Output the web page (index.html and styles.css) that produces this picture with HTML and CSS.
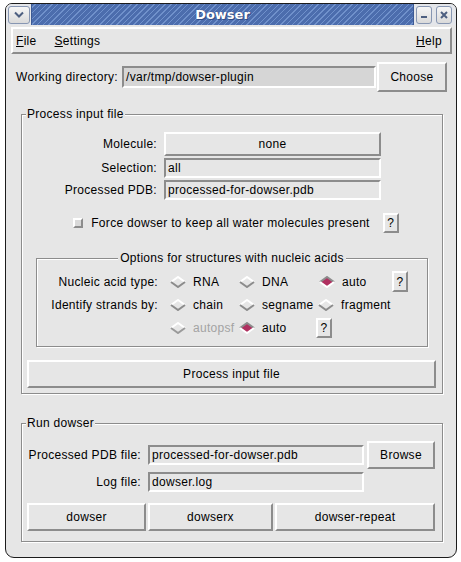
FILE: index.html
```html
<!DOCTYPE html>
<html>
<head>
<meta charset="utf-8">
<title>Dowser</title>
<link rel="stylesheet" href="styles.css">
</head>
<body>
<div class="window">
  <div class="titlebar">
    <div class="tb-btn tb-menu">
      <svg width="10" height="7" viewBox="0 0 10 7"><path d="M1 1.5 L5 5.5 L9 1.5" fill="none" stroke="#4d5f80" stroke-width="2"/></svg>
    </div>
    <div class="tb-title">Dowser</div>
    <div class="tb-btn tb-min">
      <svg width="8" height="8" viewBox="0 0 8 8"><rect x="1" y="5" width="6" height="2" fill="#4d5f80"/></svg>
    </div>
    <div class="tb-btn tb-close">
      <svg width="8" height="8" viewBox="0 0 8 8"><path d="M1 1 L7 7 M7 1 L1 7" stroke="#4d5f80" stroke-width="2"/></svg>
    </div>
  </div>

  <div class="menubar">
    <span class="menu"><u>F</u>ile</span>
    <span class="menu"><u>S</u>ettings</span>
    <span class="spacer"></span>
    <span class="menu"><u>H</u>elp</span>
  </div>

  <div class="workrow">
    <span class="worklabel">Working directory:</span>
    <span class="entry entry-ro workentry">/var/tmp/dowser-plugin</span>
    <span class="button choose">Choose</span>
  </div>

  <fieldset class="group process">
    <legend>Process input file</legend>
    <div class="form">
      <span class="flabel">Molecule:</span><span class="button molecule">none</span>
      <span class="flabel">Selection:</span><span class="entry">all</span>
      <span class="flabel">Processed PDB:</span><span class="entry">processed-for-dowser.pdb</span>
    </div>
    <div class="checkrow">
      <span class="checkbox"></span>
      <span>Force dowser to keep all water molecules present</span>
      <span class="qbtn qcheck">?</span>
    </div>

    <fieldset class="group options">
      <legend class="center">Options for structures with nucleic acids</legend>
      <div class="optgrid">
        <span class="olabel">Nucleic acid type:</span>
        <span class="radio"><svg class="dia" width="16" height="12" viewBox="0 0 16 12"><path d="M1 6 L8 1 L15 6" fill="none" stroke="#fff" stroke-width="2"/><path d="M1 6 L8 11 L15 6" fill="none" stroke="#8c8c8c" stroke-width="2"/></svg>RNA</span>
        <span class="radio"><svg class="dia" width="16" height="12" viewBox="0 0 16 12"><path d="M1 6 L8 1 L15 6" fill="none" stroke="#fff" stroke-width="2"/><path d="M1 6 L8 11 L15 6" fill="none" stroke="#8c8c8c" stroke-width="2"/></svg>DNA</span>
        <span class="radio"><svg class="dia" width="16" height="12" viewBox="0 0 16 12"><path d="M8 1 L15 6 L8 11 L1 6 Z" fill="#b03060"/><path d="M1 6 L8 1 L15 6" fill="none" stroke="#8c8c8c" stroke-width="2"/><path d="M1 6 L8 11 L15 6" fill="none" stroke="#fff" stroke-width="2"/></svg>auto</span>
        <span class="qcell"><span class="qbtn q1">?</span></span>

        <span class="olabel">Identify strands by:</span>
        <span class="radio"><svg class="dia" width="16" height="12" viewBox="0 0 16 12"><path d="M1 6 L8 1 L15 6" fill="none" stroke="#fff" stroke-width="2"/><path d="M1 6 L8 11 L15 6" fill="none" stroke="#8c8c8c" stroke-width="2"/></svg>chain</span>
        <span class="radio"><svg class="dia" width="16" height="12" viewBox="0 0 16 12"><path d="M1 6 L8 1 L15 6" fill="none" stroke="#fff" stroke-width="2"/><path d="M1 6 L8 11 L15 6" fill="none" stroke="#8c8c8c" stroke-width="2"/></svg>segname</span>
        <span class="radio r3"><svg class="dia" width="16" height="12" viewBox="0 0 16 12"><path d="M1 6 L8 1 L15 6" fill="none" stroke="#fff" stroke-width="2"/><path d="M1 6 L8 11 L15 6" fill="none" stroke="#8c8c8c" stroke-width="2"/></svg>fragment</span>
        <span></span>

        <span></span>
        <span class="radio disabled"><svg class="dia" width="16" height="12" viewBox="0 0 16 12"><path d="M1 6 L8 1 L15 6" fill="none" stroke="#fff" stroke-width="2"/><path d="M1 6 L8 11 L15 6" fill="none" stroke="#9a9a9a" stroke-width="2"/></svg>autopsf</span>
        <span class="radio"><svg class="dia" width="16" height="12" viewBox="0 0 16 12"><path d="M8 1 L15 6 L8 11 L1 6 Z" fill="#b03060"/><path d="M1 6 L8 1 L15 6" fill="none" stroke="#8c8c8c" stroke-width="2"/><path d="M1 6 L8 11 L15 6" fill="none" stroke="#fff" stroke-width="2"/></svg>auto</span>
        <span class="qcell"><span class="qbtn q3">?</span></span>
        <span></span>
      </div>
    </fieldset>

    <div class="button bigbtn">Process input file</div>
  </fieldset>

  <fieldset class="group run">
    <legend>Run dowser</legend>
    <div class="runrow">
      <span class="rlabel">Processed PDB file:</span>
      <span class="entry rentry">processed-for-dowser.pdb</span>
      <span class="button browse">Browse</span>
    </div>
    <div class="runrow logrow">
      <span class="rlabel">Log file:</span>
      <span class="entry rentry">dowser.log</span>
    </div>
    <div class="btnrow">
      <span class="button b1">dowser</span>
      <span class="button b2">dowserx</span>
      <span class="button b3">dowser-repeat</span>
    </div>
  </fieldset>
</div>
</body>
</html>
```

FILE: styles.css
```css
* { box-sizing: border-box; }

body {
  margin: 0;
  background: #ffffff;
  font-family: "Liberation Sans", Arial, sans-serif;
  font-size: 12px;
  letter-spacing: 0.3px;
  color: #000;
}

.window {
  margin: 3px 0 0 5px;
  width: 452px;
  height: 555px;
  border: 1px solid #1c1c1c;
  border-radius: 7px 7px 9px 9px;
  background: #e6e6e6;
  overflow: hidden;
}

/* ---------- title bar ---------- */
.titlebar {
  display: flex;
  align-items: center;
  height: 21px;
  padding: 0 4px 0 2px;
  background: #e4e6ea;
}

.tb-btn {
  display: flex;
  align-items: center;
  justify-content: center;
  height: 18px;
  border: 1px solid #8796b2;
  border-radius: 3px;
  background: linear-gradient(#f6f6f6, #dadada);
}

.tb-menu { width: 22px; }
.tb-min { width: 16px; margin-left: 2px; }
.tb-close { width: 16px; margin-left: 4px; }

.tb-title {
  flex: 1;
  height: 21px;
  margin-left: 1px;
  display: flex;
  align-items: center;
  justify-content: center;
  color: #fff;
  font-family: "DejaVu Sans", "Liberation Sans", sans-serif;
  font-weight: bold;
  font-size: 13px;
  letter-spacing: 0;
  text-shadow: 0 0 1px #2c4274, 1px 1px 0 #34508a;
  background:
    repeating-linear-gradient(135deg, #4c6dad 0 2px, #7091cb 2px 3px, #4c6dad 3px 4px);
  border-left: 1px solid #3d5a94;
  border-right: 1px solid #3d5a94;
}

/* ---------- menu ---------- */
.menubar {
  display: flex;
  align-items: center;
  gap: 18px;
  height: 27px;
  margin: 2px 4px 0 5px;
  padding: 0 8px 0 3px;
  border: 2px solid;
  border-color: #ffffff #8c8c8c #8c8c8c #ffffff;
}

.spacer { flex: 1; }

/* ---------- widgets ---------- */
.entry {
  display: flex;
  align-items: center;
  height: 20px;
  padding: 0 2px;
  border: 2px solid;
  border-color: #8c8c8c #ffffff #ffffff #8c8c8c;
  background: #e6e6e6;
  white-space: nowrap;
  overflow: hidden;
}

.entry-ro { background: #d6d6d6; }

.button {
  display: flex;
  align-items: center;
  justify-content: center;
  border: 2px solid;
  border-color: #ffffff #8c8c8c #8c8c8c #ffffff;
  background: #e6e6e6;
  white-space: nowrap;
}

.qbtn {
  display: inline-flex;
  align-items: center;
  justify-content: center;
  width: 16px;
  height: 20px;
  border: 2px solid;
  border-color: #ffffff #8c8c8c #8c8c8c #ffffff;
  background: #e6e6e6;
}

/* ---------- working directory ---------- */
.workrow {
  display: flex;
  align-items: center;
  height: 30px;
  margin-top: 8px;
  padding-left: 10px;
}

.worklabel { width: 106px; white-space: nowrap; }
.workentry { width: 254px; height: 22px; }
.choose { width: 70px; height: 30px; margin-left: 1px; }

/* ---------- groups ---------- */
.group {
  min-width: 0;
  border: 1px solid #8c8c8c;
  box-shadow: inset 1px 1px 0 #ffffff, 1px 1px 0 #ffffff;
}

.group > legend {
  padding: 0 1px;
  margin-left: 4px;
  line-height: 14px;
  background: #e6e6e6;
}

.group > legend.center {
  margin: 0 auto;
  padding: 0 2px;
}

.process {
  margin: 15px 13px 0 15px;
  padding: 11px 0 5px 0;
}

.form {
  display: grid;
  grid-template-columns: 135px 217px;
  grid-template-rows: 24px 20px 20px;
  column-gap: 7px;
  row-gap: 2px;
  align-items: stretch;
}

.flabel {
  display: flex;
  align-items: center;
  justify-content: flex-end;
  white-space: nowrap;
}

.molecule { height: 24px; }

.checkrow {
  display: flex;
  align-items: center;
  justify-content: center;
  height: 20px;
  margin-top: 13px;
  padding-left: 8px;
}

.checkbox {
  width: 10px;
  height: 10px;
  margin-right: 8px;
  border: 2px solid;
  border-color: #ffffff #8c8c8c #8c8c8c #ffffff;
  background: #d9d9d9;
}

.qcheck { margin-left: 13px; }

.options {
  margin: 18px 14px 0 14px;
  padding: 5px 0 7px 0;
}

.optgrid {
  display: grid;
  grid-template-columns: 133px 69px 80px 72px 17px;
  grid-auto-rows: 23px;
  align-items: center;
}

.olabel {
  text-align: right;
  padding-right: 12px;
  white-space: nowrap;
}

.radio {
  display: flex;
  align-items: center;
  white-space: nowrap;
}

.radio .dia { margin-right: 7px; flex: none; }
.r3 { margin-left: -1px; }

.disabled { color: #a3a3a3; }

.qcell { display: flex; }
.q1 { margin-left: 1px; height: 21px; }
.q3 { margin-left: -3px; }

.bigbtn {
  height: 28px;
  margin: 13px 6px 0 5px;
}

.run {
  margin: 22px 13px 0 15px;
  padding: 11px 0 10px 0;
}

.runrow {
  display: flex;
  align-items: center;
  height: 28px;
}

.logrow {
  height: 20px;
  margin-top: 3px;
}

.rlabel {
  width: 119px;
  margin-right: 7px;
  text-align: right;
  white-space: nowrap;
}

.rentry { width: 216px; }

.browse {
  width: 68px;
  height: 28px;
  margin-left: 3px;
}

.btnrow {
  display: flex;
  gap: 2px;
  margin-top: 11px;
  padding: 0 6px 0 5px;
}

.btnrow .button { height: 28px; }
.b1 { width: 119px; }
.b2 { width: 125px; }
.b3 { width: 160px; }
```
